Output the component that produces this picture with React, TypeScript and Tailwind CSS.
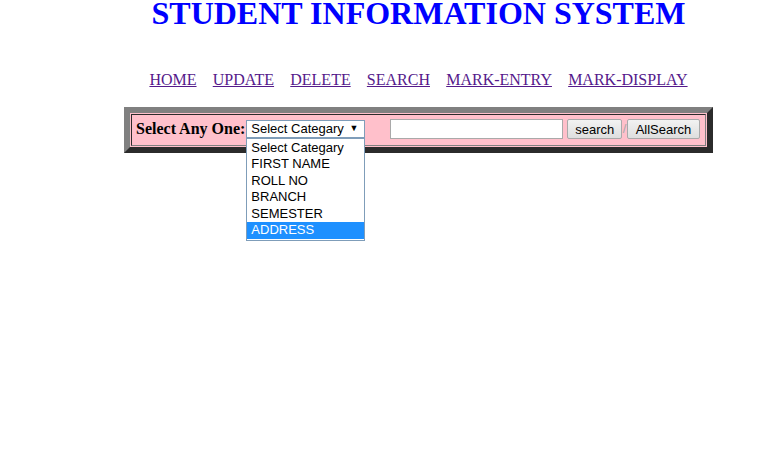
import { useState } from "react";

const navLinks = ["HOME", "UPDATE", "DELETE", "SEARCH", "MARK-ENTRY", "MARK-DISPLAY"];
const categories = ["Select Categary", "FIRST NAME", "ROLL NO", "BRANCH", "SEMESTER", "ADDRESS"];

export default function App() {
  const [hover] = useState("ADDRESS");

  return (
    <div className="w-[757px] h-[468px] bg-white overflow-hidden pl-[80px]" style={{ fontFamily: "'Liberation Serif', 'Times New Roman', serif" }}>
      <div className="flex flex-col items-center">
        {/* Titulo */}
        <h1 className="text-[32px] leading-[27px] font-bold text-[#0000ff]">STUDENT INFORMATION SYSTEM</h1>

        {/* Menu */}
        <div className="mt-[44px] flex gap-[16.2px] text-[16px] leading-[18px]">
          {navLinks.map(l => (
            <a key={l} href="#" className="underline text-[#551a8b]">{l}</a>
          ))}
        </div>

        {/* Tabela de busca */}
        <div className="mt-[18px] w-[589px] border-[6px] border-t-[#808080] border-l-[#808080] border-r-[#2b2b2b] border-b-[#2b2b2b] bg-[#ffc0cb] p-[1px]">
          <div className="border border-t-[#2b2b2b] border-l-[#2b2b2b] border-r-[#808080] border-b-[#808080] h-[32px] pb-[3px] flex items-center pl-[4px]">
            <span className="text-[16px] font-bold text-black">Select Any One:</span>
            <div className="relative ml-[1px]" style={{ fontFamily: "'Liberation Sans', Arial, sans-serif" }}>
              <div className="w-[119px] h-[18px] bg-white border border-[#7f9db9] flex items-center justify-between pl-[4px] pr-[6px] text-[13px] leading-[15px] text-black">
                <span>Select Categary</span>
                <span className="text-[9px]">▼</span>
              </div>
              <div className="absolute left-0 top-[18px] w-[119px] h-[103px] bg-white border border-[#7f9db9] pt-[1px] z-10">
                {categories.map(c => (
                  <div key={c} className={`h-[16.6px] leading-[16.6px] pl-[4px] text-[13px] ${c === hover ? "bg-[#1e90ff] text-white" : "text-black"}`}>{c}</div>
                ))}
              </div>
            </div>
            <input type="text" className="ml-[25px] w-[173px] h-[20px] bg-white border border-[#a9a9a9] outline-none" />
            <div className="ml-[4px] flex items-center text-[13px]" style={{ fontFamily: "'Liberation Sans', Arial, sans-serif" }}>
              <button className="h-[20px] w-[55px] rounded-[2px] border border-[#a9a9a9] bg-gradient-to-b from-[#f2f2f2] to-[#dedede] text-black leading-[19px]">search</button>
              <span className="mx-[0.5px] text-[#a9a9a9]">/</span>
              <button className="h-[20px] w-[73px] rounded-[2px] border border-[#a9a9a9] bg-gradient-to-b from-[#f2f2f2] to-[#dedede] text-black leading-[19px]">AllSearch</button>
            </div>
          </div>
        </div>
      </div>
    </div>
  );
}
